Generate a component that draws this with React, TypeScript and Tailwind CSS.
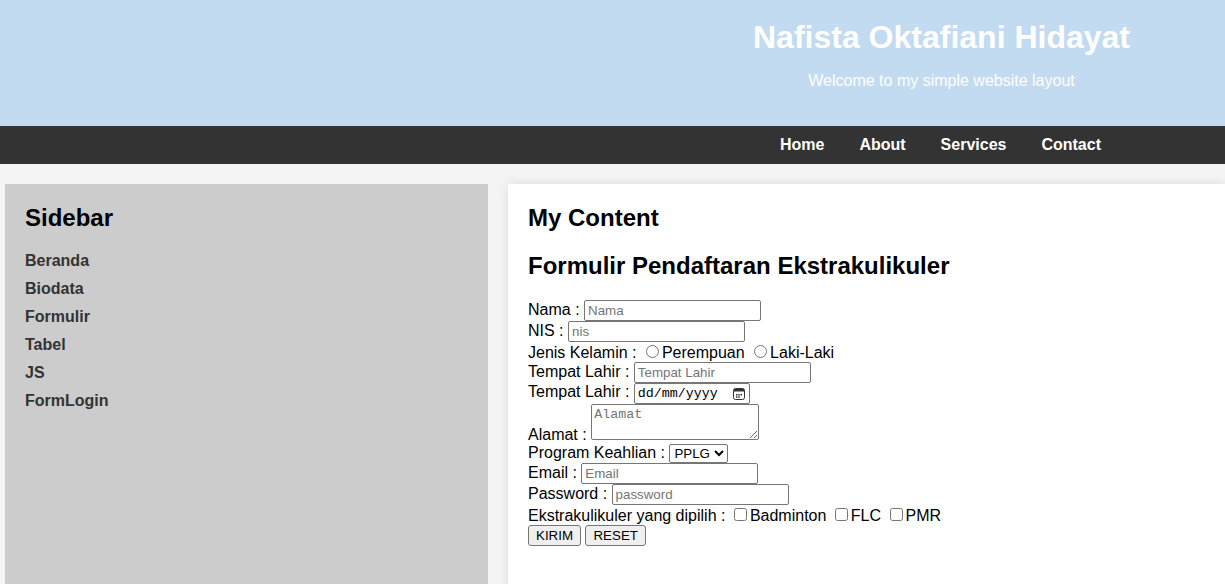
import React from "react";

export default function App() {
  const inputCls =
    "inline-block w-[177px] h-[21px] border border-[#767676] rounded-[2px] bg-white px-[3px] py-[2px] text-[13.33px] leading-[normal] text-black placeholder:text-[#757575] font-['Liberation_Sans',Arial,sans-serif] align-baseline";
  const btnCls =
    "inline-block h-[21px] border border-[#767676] rounded-[3px] bg-[#efefef] px-[7px] text-[13.33px] leading-[normal] text-black font-['Liberation_Sans',Arial,sans-serif]";
  return (
    <div className="h-[584px] bg-[#f4f4f4] font-['Liberation_Sans',Arial,sans-serif] leading-[normal] text-black overflow-hidden">
      <header className="h-[126px] bg-[#c3dbf1] flex justify-end">
        <div className="w-[567px] text-center text-white pt-[19px]">
          <h1 className="text-[32px] font-bold leading-[normal]">Nafista Oktafiani Hidayat</h1>
          <p className="mt-[16px] text-[16px]">Welcome to my simple website layout</p>
        </div>
      </header>
      <nav className="h-[38px] bg-[#333333] flex items-center justify-end pr-[124px] gap-[35px] text-white text-[16px] font-bold">
        <a className="ml-[1px]">Home</a>
        <a>About</a>
        <a>Services</a>
        <a>Contact</a>
      </nav>
      <div className="flex gap-[20px] pt-[20px] pl-[5px]">
        <aside className="w-[483px] h-[420px] shrink-0 bg-[#cccccc] p-[20px]">
          <h2 className="text-[24px] font-bold">Sidebar</h2>
          <ul className="mt-[15px] text-[16px] font-bold text-[#333333]">
            {["Beranda", "Biodata", "Formulir", "Tabel", "JS", "FormLogin"].map((t) => (
              <li key={t} className="h-[28px] flex items-center">
                {t}
              </li>
            ))}
          </ul>
        </aside>
        <main className="flex-1 h-[420px] bg-white p-[20px] shadow-[0_0_10px_rgba(0,0,0,0.1)]">
          <h2 className="text-[24px] font-bold">My Content</h2>
          <h2 className="mt-[20px] text-[24px] font-bold">Formulir Pendaftaran Ekstrakulikuler</h2>
          <form className="mt-[20px] text-[16px]">
            Nama : <input className={inputCls} placeholder="Nama" />
            <br />
            NIS : <input className={inputCls} placeholder="nis" />
            <br />
            Jenis Kelamin : <input type="radio" name="jk" className="m-[3px_3px_0_5px]" />Perempuan{" "}
            <input type="radio" name="jk" className="m-[3px_3px_0_5px]" />Laki-Laki
            <br />
            Tempat Lahir : <input className={inputCls} placeholder="Tempat Lahir" />
            <br />
            Tempat Lahir :{" "}
            <span className="inline-flex items-center justify-between w-[116px] h-[21px] border border-[#767676] rounded-[2px] bg-white pl-[3px] pr-[4px] text-[13.33px] leading-[normal] font-['Liberation_Mono',monospace] text-black align-baseline">
              <span>dd/mm/yyyy</span>
              <svg width="12" height="12" viewBox="0 0 12 12" className="shrink-0">
                <rect x="0.5" y="0.5" width="11" height="11" rx="2" fill="none" stroke="#333" strokeWidth="1" />
                <rect x="1" y="1" width="10" height="2.5" fill="#333" />
                <rect x="3" y="6" width="1.5" height="1.5" fill="#333" />
                <rect x="5.25" y="6" width="1.5" height="1.5" fill="#333" />
                <rect x="7.5" y="6" width="1.5" height="1.5" fill="#333" />
                <rect x="3" y="8.25" width="1.5" height="1.5" fill="#333" />
                <rect x="5.25" y="8.25" width="1.5" height="1.5" fill="#333" />
              </svg>
            </span>
            <br />
            Alamat :{" "}
            <textarea
              placeholder="Alamat"
              className="inline-block w-[168px] h-[36px] border border-[#767676] rounded-[2px] bg-white p-[2px] text-[13.33px] leading-[normal] font-['Liberation_Mono',monospace] placeholder:text-[#757575] align-baseline"
            />
            <br />
            Program Keahlian :{" "}
            <select className="inline-block w-[59px] h-[19px] border border-[#767676] rounded-[2px] bg-white text-[13.33px] leading-[normal] text-black">
              <option>PPLG</option>
              <option>TJKT</option>
            </select>
            <br />
            Email : <input className={inputCls} placeholder="Email" />
            <br />
            Password : <input type="password" className={inputCls} placeholder="password" />
            <br />
            Ekstrakulikuler yang dipilih : <input type="checkbox" className="m-[3px_3px_3px_4px]" />Badminton{" "}
            <input type="checkbox" className="m-[3px_3px_3px_4px]" />FLC{" "}
            <input type="checkbox" className="m-[3px_3px_3px_4px]" />PMR
            <br />
            <button type="button" className={btnCls}>KIRIM</button>{" "}
            <button type="button" className={btnCls}>RESET</button>
          </form>
        </main>
      </div>
    </div>
  );
}
